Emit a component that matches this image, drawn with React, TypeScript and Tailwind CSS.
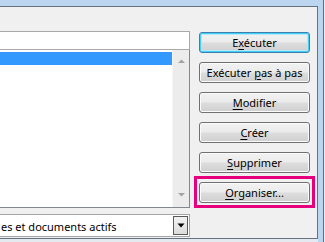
import React from "react";

const btnBase =
  "h-[21px] w-[111px] rounded-[3px] border flex items-center justify-center text-[11px] text-black leading-none bg-[linear-gradient(to_bottom,#f2f2f2_0%,#ebebeb_48%,#dddddd_52%,#cfcfcf_100%)]";

function Btn({ children, def = false }: { children: React.ReactNode; def?: boolean }) {
  return (
    <div
      className={
        btnBase +
        (def
          ? " border-[#3c7fb1] shadow-[inset_0_0_0_1px_#44cff7,inset_0_0_0_2px_#b6e6f7]"
          : " border-[#707070] shadow-[inset_0_0_0_1px_#fbfbfb]")
      }
    >
      <span className="pb-[1px]">{children}</span>
    </div>
  );
}

const U = ({ children }: { children: React.ReactNode }) => (
  <span className="underline decoration-1 underline-offset-[2px]">{children}</span>
);

export default function App() {
  return (
    <div
      className="w-[325px] h-[242px] flex overflow-hidden bg-[#f0f0f0]"
      style={{ fontFamily: '"Noto Sans", "Open Sans", sans-serif' }}
    >
      <div className="w-[323px] flex flex-col shrink-0">
        <div className="h-[6px] shrink-0 bg-[#bdd6f0]" />
        <div className="flex flex-1 min-h-0">
          <div className="w-[318px] flex flex-col shrink-0">
            <div className="h-[233px] border-t border-r border-b border-[#66727f] bg-[#f0f0f0] flex shrink-0">
              {/* left column */}
              <div className="w-[190px] pt-[24px] flex flex-col shrink-0">
                <div className="h-[19px] bg-white border border-l-0 border-[#a9a9a9]" />
                <div className="h-[158px] bg-white border border-l-0 border-t-0 border-[#828790] flex">
                  <div className="flex-1 pt-[2px]">
                    <div className="h-[13px] bg-[#3399ff]" />
                  </div>
                  <div className="w-[17px] bg-[#ececec] border-l border-[#f6f6f6] flex flex-col justify-between py-[8px]">
                    <svg width="17" height="6" viewBox="0 0 17 6">
                      <path d="M5 5 L8.5 1.5 L12 5 Z" fill="#a3a3a3" />
                    </svg>
                    <svg width="17" height="6" viewBox="0 0 17 6" className="mb-[1px]">
                      <path d="M5 1 L8.5 4.5 L12 1 Z" fill="#a3a3a3" />
                    </svg>
                  </div>
                </div>
                <div className="mt-[6px] h-[23px] bg-white border border-l-0 border-[#a5a5a5] flex items-center">
                  <span className="flex-1 text-[11px] text-black pl-[1px] whitespace-nowrap leading-none pt-[1px]">
                    es et documents actifs
                  </span>
                  <div className="w-[15px] h-[19px] mr-[1px] border border-[#5a5a5a] bg-[linear-gradient(to_bottom,#f2f2f2,#dcdcdc)] flex items-center justify-center">
                    <svg width="8" height="5" viewBox="0 0 8 5">
                      <path d="M0.5 0.5 L7.5 0.5 L4 4.5 Z" fill="#000" />
                    </svg>
                  </div>
                </div>
              </div>
              {/* buttons */}
              <div className="ml-[9px] pt-[25px] flex flex-col gap-[9px]">
                <Btn def>
                  E<U>x</U>écuter
                </Btn>
                <Btn>
                  Exécuter <U>p</U>as à pas
                </Btn>
                <Btn>
                  <U>M</U>odifier
                </Btn>
                <Btn>
                  <U>C</U>réer
                </Btn>
                <Btn>
                  <U>S</U>upprimer
                </Btn>
                <div className="relative">
                  <Btn>
                    <U>O</U>rganiser...
                  </Btn>
                  <div className="absolute -left-[5px] -right-[5px] -top-[6px] -bottom-[5px] border-[3px] border-[#e6007e] pointer-events-none" />
                </div>
              </div>
            </div>
            <div className="flex-1 bg-[#e4e9ef]" />
          </div>
          <div className="w-[5px] bg-[#bdd6f0]" />
        </div>
      </div>
      <div className="w-px bg-[#5f6c79] shrink-0" />
      <div className="w-px bg-[#e6eef6] shrink-0" />
    </div>
  );
}
